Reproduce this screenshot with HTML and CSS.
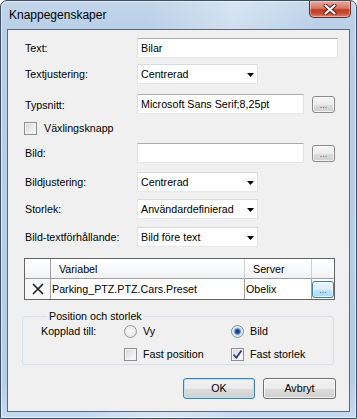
FILE: index.html
```html
<!DOCTYPE html>
<html lang="sv">
<head>
<meta charset="utf-8">
<title>Knappegenskaper</title>
<link rel="stylesheet" href="styles.css">
</head>
<body>
<div class="window">
  <div class="titlebar">
    <span class="title">Knappegenskaper</span>
    <div class="close">
      <svg width="14" height="11" viewBox="0 0 14 11">
        <path d="M2.5 1.5 L11.5 9.5 M11.5 1.5 L2.5 9.5" stroke="#5a1a10" stroke-width="4" stroke-linecap="round"/>
        <path d="M2.5 1.5 L11.5 9.5 M11.5 1.5 L2.5 9.5" stroke="#ffffff" stroke-width="2.2" stroke-linecap="round"/>
      </svg>
    </div>
  </div>
  <div class="client">
    <div class="row first">
      <span class="lbl">Text:</span>
      <div class="tb w-text">Bilar</div>
    </div>
    <div class="row gap6">
      <span class="lbl">Textjustering:</span>
      <div class="tb dd">Centrerad<svg class="arrow" width="7" height="4" viewBox="0 0 7 4"><polygon points="0,0 7,0 3.5,4" fill="#000"/></svg></div>
    </div>
    <div class="row gap10">
      <span class="lbl lower">Typsnitt:</span>
      <div class="tb w-short">Microsoft Sans Serif;8,25pt</div>
      <div class="dots">...</div>
    </div>
    <div class="checkrow">
      <span class="cb"></span>
      <span class="cbtext">Växlingsknapp</span>
    </div>
    <div class="row gap8">
      <span class="lbl">Bild:</span>
      <div class="tb w-short"></div>
      <div class="dots">...</div>
    </div>
    <div class="row gap9">
      <span class="lbl">Bildjustering:</span>
      <div class="tb dd">Centrerad<svg class="arrow" width="7" height="4" viewBox="0 0 7 4"><polygon points="0,0 7,0 3.5,4" fill="#000"/></svg></div>
    </div>
    <div class="row gap7">
      <span class="lbl">Storlek:</span>
      <div class="tb dd">Användardefinierad<svg class="arrow" width="7" height="4" viewBox="0 0 7 4"><polygon points="0,0 7,0 3.5,4" fill="#000"/></svg></div>
    </div>
    <div class="row gap8">
      <span class="lbl">Bild-textförhållande:</span>
      <div class="tb dd">Bild före text<svg class="arrow" width="7" height="4" viewBox="0 0 7 4"><polygon points="0,0 7,0 3.5,4" fill="#000"/></svg></div>
    </div>

    <div class="grid">
      <div class="gh c1"></div>
      <div class="gh c2">Variabel</div>
      <div class="gh c3">Server</div>
      <div class="gh c4"></div>
      <div class="gd c1">
        <svg width="12" height="12" viewBox="0 0 12 12"><path d="M1 1 L11 11 M11 1 L1 11" stroke="#222" stroke-width="1.7"/></svg>
      </div>
      <div class="gd c2">Parking_PTZ.PTZ.Cars.Preset</div>
      <div class="gd c3">Obelix</div>
      <div class="gd c4"><div class="dots hot">...</div></div>
    </div>

    <fieldset class="group">
      <legend>Position och storlek</legend>
      <div class="opts">
        <span class="olbl">Kopplad till:</span>
        <span class="opt"><span class="radio"></span>Vy</span>
        <span class="opt"><span class="radio on"></span>Bild</span>
        <span></span>
        <span class="opt"><span class="cb"></span>Fast position</span>
        <span class="opt"><span class="cb checked"><svg width="11" height="11" viewBox="0 0 11 11"><path d="M1.5 5.5 L4.3 8.8 L9.5 1.5" stroke="#22418a" stroke-width="1.8" fill="none"/></svg></span>Fast storlek</span>
      </div>
    </fieldset>

    <div class="buttons">
      <div class="btn default">OK</div>
      <div class="btn">Avbryt</div>
    </div>
  </div>
</div>
</body>
</html>
```
FILE: styles.css
```css
html, body {
  margin: 0;
  padding: 0;
  background: #ffffff;
}
body {
  font-family: "Liberation Sans", Arial, sans-serif;
  font-size: 10.7px;
  color: #000;
}
.window {
  width: 357px;
  height: 419px;
  box-sizing: border-box;
  border: 1px solid #3b4f66;
  border-radius: 7px 7px 0 0;
  padding: 0 6px 6px 6px;
  display: flex;
  flex-direction: column;
  background:
    linear-gradient(100deg, rgba(255,255,255,0) 35%, rgba(255,255,255,0.35) 55%, rgba(255,255,255,0) 75%),
    linear-gradient(to bottom, #c3d6eb 0, #b8cfe7 30px, #b6cde6 380px, #c6dbef 417px);
  box-shadow: inset 0 0 0 1px rgba(255,255,255,0.55);
}
.titlebar {
  height: 28px;
  display: flex;
  justify-content: space-between;
  align-items: flex-start;
}
.title {
  margin-top: 7px;
  margin-left: 2px;
  font-size: 12px;
  line-height: 14px;
  color: #000;
}
.close {
  width: 42px;
  height: 17px;
  margin-right: -1px;
  box-sizing: border-box;
  border: 1px solid #6b2a1f;
  border-top: none;
  border-radius: 0 0 5px 5px;
  background: linear-gradient(to bottom, #e9a99c 0, #d47a68 45%, #bd3c24 55%, #c9513a 80%, #e08a6f 100%);
  box-shadow: inset 0 0 0 1px rgba(255,255,255,0.35);
  display: flex;
  align-items: center;
  justify-content: center;
}
.client {
  flex: 1;
  border: 1px solid #55697f;
  background: #f0f0f0;
  padding: 8px 0 0 17px;
  display: flex;
  flex-direction: column;
  align-items: flex-start;
}
.row {
  display: flex;
  align-items: center;
  height: 20px;
}
.gap6 { margin-top: 6px; }
.gap7 { margin-top: 7px; }
.gap8 { margin-top: 8px; }
.gap9 { margin-top: 9px; }
.gap10 { margin-top: 10px; }
.lbl {
  width: 112px;
  line-height: 13px;
  padding-top: 1px;
}
.lbl.lower { padding-top: 3px; }
.tb {
  height: 20px;
  box-sizing: border-box;
  border: 1px solid;
  border-color: #abadb3 #e2e3ea #e3e9ef #dbdfe6;
  background: #ffffff;
  padding-left: 3px;
  line-height: 18px;
  white-space: nowrap;
}
.w-text { width: 201px; }
.w-short { width: 167px; }
.dd {
  width: 121px;
  display: flex;
  justify-content: space-between;
  align-items: center;
  padding-right: 3px;
  border-color: #d7dade #e2e3ea #e3e9ef #e0e3e8;
}
.arrow { flex: none; margin-top: 1px; }
.dots {
  width: 23px;
  height: 17px;
  margin-left: 8px;
  box-sizing: border-box;
  border: 1px solid #8a8a8a;
  border-radius: 3px;
  background: linear-gradient(to bottom, #f6f6f6 0, #ebebeb 50%, #dddddd 51%, #cfcfcf 100%);
  box-shadow: inset 0 0 0 1px rgba(255,255,255,0.7);
  font-size: 9px;
  line-height: 17px;
  text-align: center;
  color: #555;
}
.checkrow {
  margin-top: 8px;
  margin-left: -1px;
  height: 13px;
  display: flex;
  align-items: center;
}
.cb {
  width: 13px;
  height: 13px;
  box-sizing: border-box;
  border: 1px solid #8e8f8f;
  background: linear-gradient(135deg, #d4d4d4 0, #f3f3f3 70%, #fbfbfb 100%);
  box-shadow: inset 0 0 0 1px #f4f4f4;
  display: inline-flex;
  align-items: center;
  justify-content: center;
  flex: none;
}
.cb.checked svg { display: block; }
.cbtext {
  margin-left: 7px;
  line-height: 13px;
}
.grid {
  margin-top: 11px;
  margin-left: -1px;
  width: 311px;
  box-sizing: border-box;
  border: 1px solid #646464;
  display: grid;
  grid-template-columns: 26px 194px 67px 22px;
  grid-template-rows: 20px 20px;
  background: #ffffff;
}
.gh, .gd {
  border-right: 1px solid #d0d0d0;
  box-sizing: border-box;
  white-space: nowrap;
  display: flex;
  align-items: center;
}
.gh {
  border-bottom: 1px solid #a0a0a0;
  background: linear-gradient(to bottom, #ffffff 0, #f7f8fa 60%, #f1f2f4 100%);
  padding-left: 8px;
  padding-top: 1px;
}
.gd {
  border-right-color: #a0a0a0;
  padding-left: 1px;
}
.gh.c4, .gd.c4 { border-right: none; }
.gh.c1 { border-right-color: #a0a0a0; }
.gd.c1 {
  justify-content: center;
  padding-left: 0;
  background: #f7f7f7;
}
.gd.c4 { padding-left: 0; }
.dots.hot {
  margin-left: 0;
  width: 22px;
  height: 17px;
  border-color: #3c7fb1;
  background: linear-gradient(to bottom, #eaf6fd 0, #d9f0fc 50%, #bee6fd 51%, #a7d9f5 100%);
}
.group {
  margin: 10px 0 0 -3px;
  width: 312px;
  box-sizing: border-box;
  border: 1px solid #d5dfe5;
  border-radius: 3px;
  padding: 2px 0 3px 18px;
}
.group legend {
  padding: 0 2px;
  margin-left: 6px;
  line-height: 13px;
}
.opts {
  display: grid;
  grid-template-columns: 83px 107px auto;
  grid-auto-rows: 13px;
  row-gap: 10px;
  align-items: center;
}
.olbl { line-height: 13px; }
.opt {
  display: flex;
  align-items: center;
  line-height: 13px;
}
.opt .radio, .opt .cb { margin-right: 6px; }
.radio {
  width: 13px;
  height: 13px;
  box-sizing: border-box;
  border-radius: 50%;
  border: 1px solid #979797;
  background: radial-gradient(circle at 45% 45%, #fafafa 0, #e9e9e9 60%, #d6d6d6 100%);
  flex: none;
}
.radio.on {
  border-color: #7a90ad;
  background: radial-gradient(circle at 50% 50%, #0c2f6a 0, #1d4f9a 1.8px, #6d9ad4 3px, #cfe0f2 4px, #f0f0f0 5px, #dadada 100%);
}
.buttons {
  margin-top: 13px;
  align-self: stretch;
  display: flex;
  justify-content: flex-end;
  padding-right: 13px;
  gap: 8px;
}
.btn {
  width: 73px;
  height: 21px;
  box-sizing: border-box;
  border: 1px solid #707070;
  border-radius: 3px;
  background: linear-gradient(to bottom, #f2f2f2 0, #ebebeb 50%, #dddddd 51%, #cfcfcf 100%);
  box-shadow: inset 0 0 0 1px rgba(255,255,255,0.75);
  text-align: center;
  line-height: 19px;
}
.btn.default {
  width: 72px;
  border-color: #3c7fb1;
  box-shadow: inset 0 0 0 1px #b9e4f8;
}
```
